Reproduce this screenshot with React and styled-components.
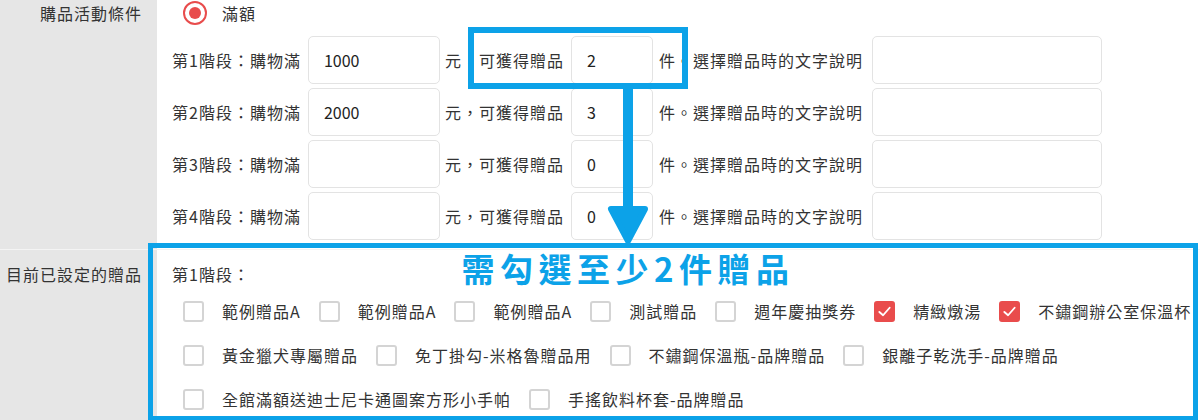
import React from "react";
import styled, { createGlobalStyle } from "styled-components";

const Global = createGlobalStyle`
  html, body { margin: 0; padding: 0; background: #fff; }
  body {
    font-family: "Noto Sans CJK TC", "Noto Sans", sans-serif;
    color: #333;
    font-size: 16px;
    letter-spacing: 1px;
  }
`;

const Page = styled.div`
  position: relative;
  width: 1200px;
  height: 420px;
  overflow: hidden;
  background: #fff;
`;

const FormRow = styled.div`
  display: flex;
  border-top: ${(p) => (p.$divider ? "1px solid #f4f4f4" : "none")};
`;

const LabelCell = styled.div`
  flex: 0 0 157px;
  box-sizing: border-box;
  background: #e6e6e6;
  text-align: right;
  padding: ${(p) => p.$top}px 15px 0 0;
  line-height: 26px;
  white-space: nowrap;
`;

const ContentCell = styled.div`
  flex: 1;
  min-width: 0;
  display: flex;
  flex-direction: column;
  padding-bottom: ${(p) => p.$bottom || 0}px;
`;

const RadioLine = styled.div`
  display: flex;
  align-items: center;
  height: 26px;
  padding-left: 26px;
  gap: 15px;
`;

const Radio = styled.span`
  width: 24px;
  height: 24px;
  box-sizing: border-box;
  border-radius: 50%;
  border: 2px solid #e84c4c;
  display: flex;
  align-items: center;
  justify-content: center;
  &::after {
    content: "";
    width: 12px;
    height: 12px;
    border-radius: 50%;
    background: #e84c4c;
  }
`;

const Tiers = styled.div`
  display: flex;
  flex-direction: column;
  gap: 4px;
  margin-top: 10px;
  padding-left: 15px;
`;

const TierRow = styled.div`
  display: flex;
  align-items: center;
  height: 48px;
  white-space: nowrap;
`;

const Text = styled.span`
  margin: 0 ${(p) => p.$mr ?? 6}px 0 ${(p) => p.$ml ?? 0}px;
`;

const Input = styled.div`
  width: ${(p) => p.$w}px;
  height: 48px;
  box-sizing: border-box;
  border: 1px solid #e3e3e3;
  border-radius: 5px;
  padding-left: 15px;
  display: flex;
  align-items: center;
  letter-spacing: 0;
  color: #222;
  background: #fff;
`;

const StageTitle = styled.div`
  padding: 11px 0 0 15px;
  line-height: 26px;
  margin-bottom: 2px;
`;

const GiftRow = styled.div`
  display: flex;
  align-items: center;
  height: 44px;
  padding-left: 26px;
  white-space: nowrap;
`;

const GiftItem = styled.label`
  display: flex;
  align-items: center;
  gap: 18px;
  margin-right: 18px;
`;

const Box = styled.span`
  flex: 0 0 21px;
  width: 21px;
  height: 21px;
  box-sizing: border-box;
  border-radius: 3px;
  border: 2px solid ${(p) => (p.$checked ? "#e94c4c" : "#d4d4d4")};
  background: ${(p) => (p.$checked ? "#e94c4c" : "#fff")};
  display: flex;
  align-items: center;
  justify-content: center;
`;

const Highlight = styled.div`
  position: absolute;
  left: ${(p) => p.$x}px;
  top: ${(p) => p.$y}px;
  width: ${(p) => p.$w}px;
  height: ${(p) => p.$h}px;
  box-sizing: border-box;
  border: ${(p) => p.$b || 5}px solid #0ca2e8;
  pointer-events: none;
`;

const ArrowSvg = styled.svg`
  position: absolute;
  left: 603px;
  top: 86px;
`;

const Callout = styled.div`
  position: absolute;
  left: 0;
  width: 1256px;
  top: 246px;
  text-align: center;
  font-size: 33px;
  font-weight: 700;
  letter-spacing: 5.5px;
  line-height: 44px;
  color: #0ca2e8;
`;

const tiers = [
  { n: 1, amount: "1000", count: "2" },
  { n: 2, amount: "2000", count: "3" },
  { n: 3, amount: "", count: "0" },
  { n: 4, amount: "", count: "0" },
];

const giftRows = [
  [
    ["範例贈品A"],
    ["範例贈品A"],
    ["範例贈品A"],
    ["測試贈品"],
    ["週年慶抽獎券"],
    ["精緻燉湯", true],
    ["不鏽鋼辦公室保溫杯", true],
  ],
  [
    ["黃金獵犬專屬贈品"],
    ["免丁掛勾-米格魯贈品用"],
    ["不鏽鋼保溫瓶-品牌贈品"],
    ["銀離子乾洗手-品牌贈品"],
  ],
  [["全館滿額送迪士尼卡通圖案方形小手帕"], ["手搖飲料杯套-品牌贈品"]],
];

const Check = () => (
  <svg width="15" height="15" viewBox="0 0 16 16">
    <path d="M2.5 8.5 L6.5 12 L13.5 4" fill="none" stroke="#fff" strokeWidth="2" strokeLinecap="round" strokeLinejoin="round" />
  </svg>
);

export default function App() {
  return (
    <>
      <Global />
      <Page>
        <FormRow>
          <LabelCell $top={0}>購品活動條件</LabelCell>
          <ContentCell $bottom={9}>
            <RadioLine>
              <Radio />
              <span>滿額</span>
            </RadioLine>
            <Tiers>
              {tiers.map((t) => (
                <TierRow key={t.n}>
                  <Text $mr={7}>第{t.n}階段：購物滿</Text>
                  <Input $w={132}>{t.amount}</Input>
                  <Text $ml={5} $mr={7}>元，可獲得贈品</Text>
                  <Input $w={82}>{t.count}</Input>
                  <Text $ml={6} $mr={9}>件。選擇贈品時的文字說明</Text>
                  <Input $w={230} />
                </TierRow>
              ))}
            </Tiers>
          </ContentCell>
        </FormRow>
        <FormRow $divider>
          <LabelCell $top={11}>目前已設定的贈品</LabelCell>
          <ContentCell>
            <StageTitle>第1階段：</StageTitle>
            {giftRows.map((row, i) => (
              <GiftRow key={i}>
                {row.map(([name, checked], j) => (
                  <GiftItem key={j}>
                    <Box $checked={checked}>{checked && <Check />}</Box>
                    <span>{name}</span>
                  </GiftItem>
                ))}
              </GiftRow>
            ))}
          </ContentCell>
        </FormRow>

        <Highlight $x={468} $y={27} $w={220} $h={62} $b={6} />
        <ArrowSvg width="50" height="160" viewBox="0 0 50 160">
          <rect x="20" y="0" width="10" height="124" fill="#0ca2e8" />
          <path d="M8 123 L42 123 L25 155 Z" fill="#0ca2e8" stroke="#0ca2e8" strokeWidth="6" strokeLinejoin="round" />
        </ArrowSvg>
        <Highlight $x={148} $y={243} $w={1050} $h={178} />
        <Callout>需勾選至少2件贈品</Callout>
      </Page>
    </>
  );
}
